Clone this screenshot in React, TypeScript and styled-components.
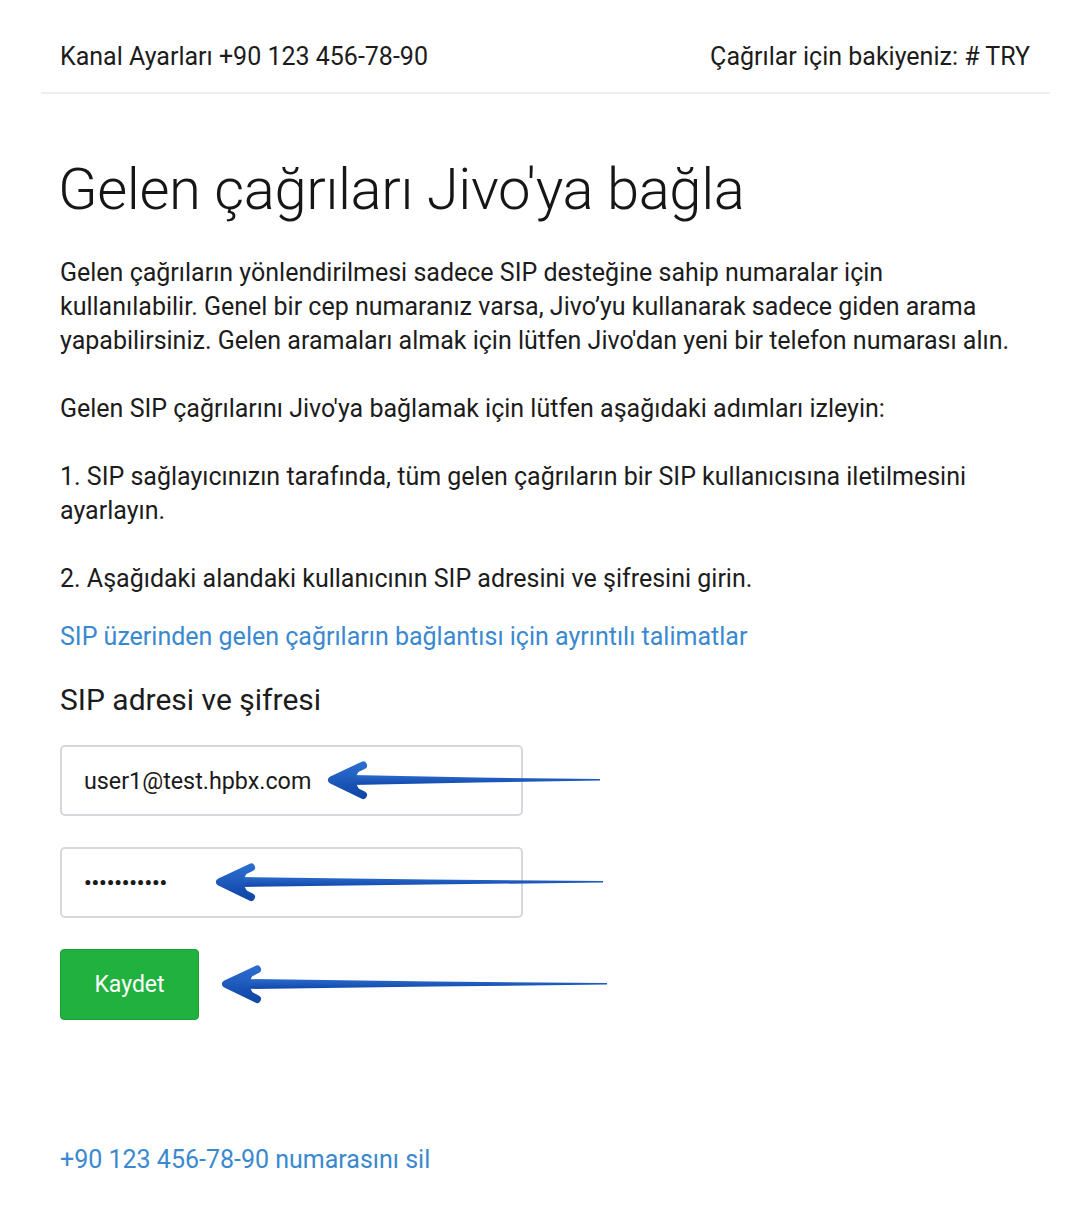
import React from "react";
import styled, { createGlobalStyle } from "styled-components";

const GlobalStyle = createGlobalStyle`
  body {
    margin: 0;
    background: #ffffff;
    font-family: Roboto, "Noto Sans", Arial, sans-serif;
    color: #1a1a1a;
  }
`;

// Layout styles
const Page = styled.div`
  width: 1009px;
  margin-left: 41px;
`;

const Header = styled.div`
  display: flex;
  justify-content: space-between;
  align-items: flex-start;
  padding: 40px 20px 0 19px;
  height: 52px;
  border-bottom: 2px solid #eeeeee;
  font-size: 25px;
  line-height: 34px;
  color: #1c1c1c;
`;

const Content = styled.div`
  padding: 0 19px;
`;

const Title = styled.h1`
  margin: 59px 0 0 -2px;
  font-size: 58px;
  font-weight: 300;
  line-height: 72px;
  color: #161616;
  letter-spacing: -0.4px;
`;

const Paragraph = styled.p`
  max-width: 958px;
  margin: 34px 0 0;
  font-size: 25px;
  line-height: 34px;
  color: #1c1c1c;
  &:first-of-type {
    margin-top: 31px;
  }
`;

const Link = styled.a<{ top: number }>`
  display: block;
  margin-top: ${({ top }) => top}px;
  font-size: 25px;
  line-height: 34px;
  color: #3a89d0;
  text-decoration: none;
`;

const SubTitle = styled.h2`
  margin: 26px 0 0;
  font-size: 30px;
  font-weight: 400;
  line-height: 40px;
  color: #1c1c1c;
`;

const Form = styled.div`
  display: flex;
  flex-direction: column;
  gap: 32px;
  margin-top: 25px;
`;

const FieldRow = styled.div`
  position: relative;
  height: 70px;
`;

const Input = styled.div<{ dots?: boolean }>`
  box-sizing: border-box;
  width: 463px;
  height: 71px;
  border: 2px solid #d6d8de;
  border-radius: 5px;
  padding-left: 22px;
  display: flex;
  align-items: center;
  font-size: ${({ dots }) => (dots ? "21px" : "23.3px")};
  color: #1a1a1a;
  font-weight: ${({ dots }) => (dots ? 700 : 400)};
`;

const SaveButton = styled.button`
  box-sizing: border-box;
  width: 139px;
  height: 71px;
  border: 1px solid #1d9e37;
  border-radius: 4px;
  background: #21b13f;
  color: #ffffff;
  font-family: Roboto, "Noto Sans", Arial, sans-serif;
  font-size: 23px;
`;

const ArrowBox = styled.svg<{ left: number }>`
  position: absolute;
  left: ${({ left }) => left}px;
  top: 17px;
  overflow: visible;
`;

const Arrow: React.FC<{ id: string; left: number; length: number }> = ({
  id,
  left,
  length,
}) => (
  <ArrowBox left={left} width={length} height={36} viewBox={`0 0 ${length} 36`}>
    <defs>
      <linearGradient id={id} x1="0" y1="0" x2="0" y2="1">
        <stop offset="0" stopColor="#2a6bcc" />
        <stop offset="1" stopColor="#1148aa" />
      </linearGradient>
    </defs>
    <path
      d={`M26 13 L${length * 0.55} 15.5 L${length} 17 L${length} 18.6 L${
        length * 0.55
      } 20.5 L26 23 Z`}
      fill={`url(#${id})`}
    />
    <path
      d="M37 3.5 L6 18 L37 33"
      fill="none"
      stroke={`url(#${id})`}
      strokeWidth={8}
      strokeLinecap="round"
      strokeLinejoin="round"
    />
    <path d="M6 18 L34 7 L28 18 L34 29 Z" fill={`url(#${id})`} />
  </ArrowBox>
);

const DeleteLink = styled(Link)`
  margin-bottom: 40px;
`;

export default function App() {
  return (
    <>
      <GlobalStyle />
      <Page>
        <Header>
          <span>Kanal Ayarları +90 123 456-78-90</span>
          <span>Çağrılar için bakiyeniz: # TRY</span>
        </Header>
        <Content>
          <Title>Gelen çağrıları Jivo'ya bağla</Title>
          <Paragraph>
            Gelen çağrıların yönlendirilmesi sadece SIP desteğine sahip numaralar için
            kullanılabilir. Genel bir cep numaranız varsa, Jivo’yu kullanarak sadece giden arama
            yapabilirsiniz. Gelen aramaları almak için lütfen Jivo'dan yeni bir telefon numarası alın.
          </Paragraph>
          <Paragraph>
            Gelen SIP çağrılarını Jivo'ya bağlamak için lütfen aşağıdaki adımları izleyin:
          </Paragraph>
          <Paragraph>
            1. SIP sağlayıcınızın tarafında, tüm gelen çağrıların bir SIP kullanıcısına iletilmesini
            ayarlayın.
          </Paragraph>
          <Paragraph>2. Aşağıdaki alandaki kullanıcının SIP adresini ve şifresini girin.</Paragraph>
          <Link top={24} href="#">
            SIP üzerinden gelen çağrıların bağlantısı için ayrıntılı talimatlar
          </Link>
          <SubTitle>SIP adresi ve şifresi</SubTitle>
          <Form>
            <FieldRow>
              <Input>user1@test.hpbx.com</Input>
              <Arrow id="a1" left={266} length={274} />
            </FieldRow>
            <FieldRow>
              <Input dots>•••••••••••</Input>
              <Arrow id="a2" left={154} length={389} />
            </FieldRow>
            <FieldRow>
              <SaveButton>Kaydet</SaveButton>
              <Arrow id="a3" left={160} length={387} />
            </FieldRow>
          </Form>
          <DeleteLink top={124} href="#">
            +90 123 456-78-90 numarasını sil
          </DeleteLink>
        </Content>
      </Page>
    </>
  );
}
